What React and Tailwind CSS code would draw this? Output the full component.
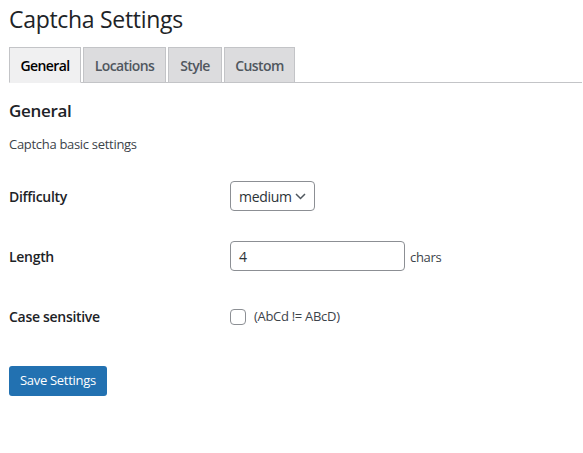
import React from 'react';

const tabs = [
  { label: 'General', width: 'w-[72px]' },
  { label: 'Locations', width: 'w-[83px]' },
  { label: 'Style', width: 'w-[54px]' },
  { label: 'Custom', width: 'w-[71px]' },
];

const App = () => {
  return (
    <div className="min-h-[453px] w-full bg-white text-[#1d2327] font-['Open_Sans',sans-serif]">
      <div className="pl-[9px] pr-[1px]">
        {/* Title */}
        <h1 className="pt-[4px] text-[23px] leading-[30px] font-normal text-[#1d2327] tracking-[-0.3px]">
          Captcha Settings
        </h1>

        {/* Tabs */}
        <div className="mt-[13px] flex gap-[2px] border-b border-[#c3c4c7]">
          {tabs.map((tab, i) => (
            <div
              key={tab.label}
              className={
                (i === 0
                  ? 'h-[36px] -mb-px flex items-center justify-center border border-[#c3c4c7] border-b-[#f0f0f1] bg-[#f0f0f1] text-[14px] font-semibold text-black tracking-[-0.6px] '
                  : 'h-[35px] flex items-center justify-center border border-[#c3c4c7] border-b-0 bg-[#dcdcde] text-[14px] font-semibold text-[#50575e] tracking-[-0.6px] ') +
                tab.width
              }
            >
              {tab.label}
            </div>
          ))}
        </div>

        {/* Section heading */}
        <h2 className="mt-[16px] text-[17px] leading-[24px] font-semibold text-[#1d2327] tracking-[-0.3px]">
          General
        </h2>
        <p className="mt-[11px] text-[13px] leading-[20px] text-[#3c434a] tracking-[-0.3px]">
          Captcha basic settings
        </p>

        {/* Form rows */}
        <div className="mt-[12px]">
          <div className="h-[60px] flex items-center">
            <div className="w-[221px] text-[14px] font-semibold text-[#1d2327] tracking-[-0.3px]">Difficulty</div>
            <div className="h-[30px] w-[85px] flex items-center justify-between pl-[8px] pr-[8px] border border-[#8c8f94] rounded-[4px] text-[14px] text-[#2c3338] tracking-[-0.3px]">
              <span>medium</span>
              <svg width="11" height="7" viewBox="0 0 11 7" fill="none">
                <path d="M1 1l4.5 4.5L10 1" stroke="#50575e" strokeWidth="1.5" />
              </svg>
            </div>
          </div>

          <div className="h-[60px] flex items-center">
            <div className="w-[221px] text-[14px] font-semibold text-[#1d2327] tracking-[-0.3px]">Length</div>
            <div className="h-[30px] w-[175px] flex items-center pl-[8px] border border-[#8c8f94] rounded-[4px] text-[14px] text-[#2c3338]">
              4
            </div>
            <span className="ml-[5px] mt-[4px] text-[13px] text-[#3c434a] tracking-[-0.3px]">chars</span>
          </div>

          <div className="h-[60px] flex items-center">
            <div className="w-[221px] text-[14px] font-semibold text-[#1d2327] tracking-[-0.3px]">Case sensitive</div>
            <div className="mt-[2px] w-[16px] h-[16px] border border-[#8c8f94] rounded-[4px] bg-white" />
            <span className="ml-[8px] mt-[2px] text-[13px] text-[#3c434a] tracking-[-0.3px]">(AbCd != ABcD)</span>
          </div>
        </div>

        {/* Save */}
        <button className="mt-[20px] h-[30px] px-[11px] rounded-[3px] bg-[#2271b1] text-white text-[13px] tracking-[-0.3px]">
          Save Settings
        </button>
      </div>
    </div>
  );
};

export default App;
